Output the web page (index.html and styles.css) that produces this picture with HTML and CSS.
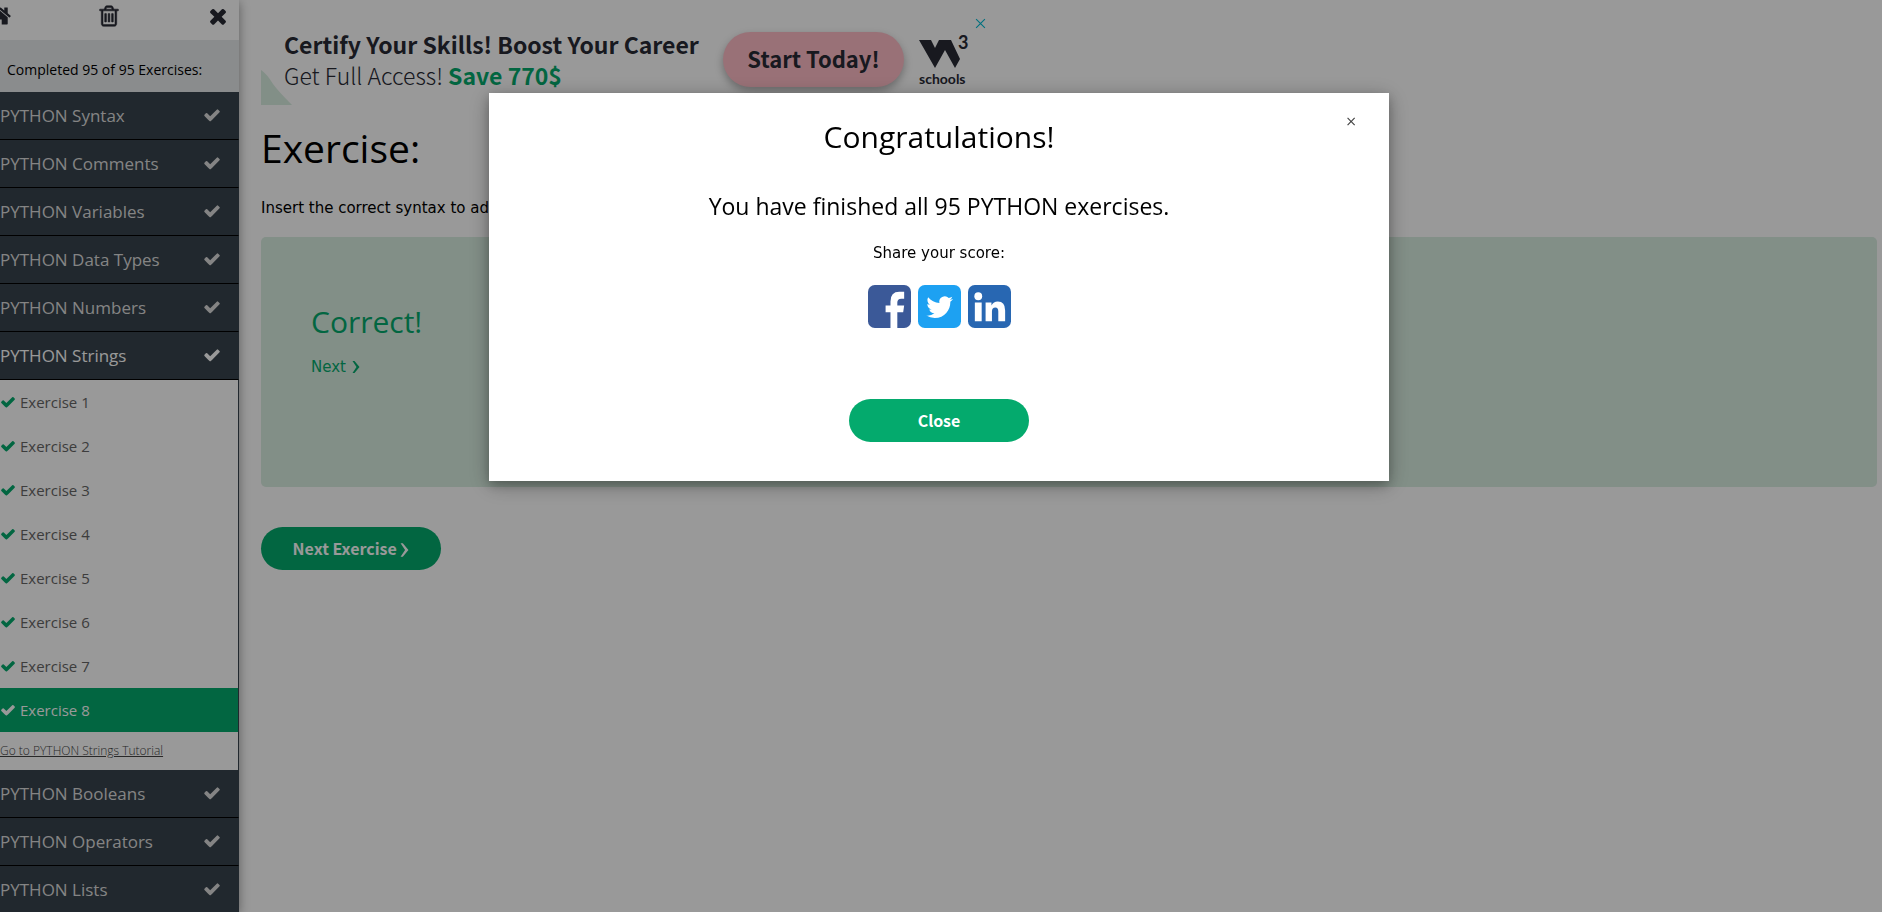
FILE: index.html
```html
<!DOCTYPE html>
<html lang="en">
<head>
<meta charset="utf-8">
<title>PYTHON Exercises</title>
<link rel="stylesheet" href="styles.css">
</head>
<body>
<svg class="sprite" aria-hidden="true">
  <symbol id="check" viewBox="0 0 1792 1792"><path d="M1671 566q0 40-28 68l-724 724-136 136q-28 28-68 28t-68-28l-136-136-362-362q-28-28-28-68t28-68l136-136q28-28 68-28t68 28l294 295 656-657q28-28 68-28t68 28l136 136q28 28 28 68z"/></symbol>
  <symbol id="times" viewBox="0 0 1792 1792"><path d="M1490 1322q0 40-28 68l-136 136q-28 28-68 28t-68-28l-294-294-294 294q-28 28-68 28t-68-28l-136-136q-28-28-28-68t28-68l294-294-294-294q-28-28-28-68t28-68l136-136q28-28 68-28t68 28l294 294 294-294q28-28 68-28t68 28l136 136q28 28 28 68t-28 68l-294 294 294 294q28 28 28 68z"/></symbol>
  <symbol id="home" viewBox="0 0 1792 1792"><path d="M1472 992v480q0 26-19 45t-45 19h-384v-384h-256v384h-384q-26 0-45-19t-19-45v-480q0-1 .5-3t.5-3l575-474 575 474q1 2 1 6zm223-69l-62 74q-8 9-21 11h-3q-13 0-21-7l-692-577-692 577q-12 8-24 7-13-2-21-11l-62-74q-8-10-7-23.5t11-21.5l719-599q32-26 76-26t76 26l244 204v-195q0-14 9-23t23-9h192q14 0 23 9t9 23v408l219 182q10 8 11 21.5t-7 23.5z"/></symbol>
  <symbol id="trash" viewBox="0 0 1792 1792"><path d="M704 736v576q0 14-9 23t-23 9h-64q-14 0-23-9t-9-23v-576q0-14 9-23t23-9h64q14 0 23 9t9 23zm256 0v576q0 14-9 23t-23 9h-64q-14 0-23-9t-9-23v-576q0-14 9-23t23-9h64q14 0 23 9t9 23zm256 0v576q0 14-9 23t-23 9h-64q-14 0-23-9t-9-23v-576q0-14 9-23t23-9h64q14 0 23 9t9 23zm128 724v-948h-896v948q0 22 7 40.500t14.500 27 10.500 8.500h832q3 0 10.500-8.500t14.500-27 7-40.500zm-672-1076h448l-48-117q-7-9-17-11h-317q-10 2-17 11zm928 32v64q0 14-9 23t-23 9h-96v948q0 83-47 143.500t-113 60.500h-832q-66 0-113-58.500t-47-141.500v-952h-96q-14 0-23-9t-9-23v-64q0-14 9-23t23-9h309l70-167q15-37 54-63t79-26h320q40 0 79 26t54 63l70 167h309q14 0 23 9t9 23z"/></symbol>
  <symbol id="chevron" viewBox="0 0 8 12"><path d="M0.500 0H2.500L7.500 6L2.500 12H0.500L4.500 6z"/></symbol>
</svg>

<div class="app">
  <nav class="sidebar">
    <div class="toolbar">
      <a class="tool" href="#" aria-label="Home"><svg class="icon-lg"><use href="#home"/></svg></a>
      <button class="tool" type="button" aria-label="Reset score"><svg class="icon-lg icon-trash"><use href="#trash"/></svg></button>
      <button class="tool" type="button" aria-label="Close menu"><svg class="icon-lg"><use href="#times"/></svg></button>
    </div>
    <p class="progress">Completed 95 of 95 Exercises:</p>
    <button class="topic" type="button">PYTHON Syntax<svg class="icon-md"><use href="#check"/></svg></button>
    <button class="topic" type="button">PYTHON Comments<svg class="icon-md"><use href="#check"/></svg></button>
    <button class="topic" type="button">PYTHON Variables<svg class="icon-md"><use href="#check"/></svg></button>
    <button class="topic" type="button">PYTHON Data Types<svg class="icon-md"><use href="#check"/></svg></button>
    <button class="topic" type="button">PYTHON Numbers<svg class="icon-md"><use href="#check"/></svg></button>
    <button class="topic topic-open" type="button">PYTHON Strings<svg class="icon-md"><use href="#check"/></svg></button>
    <div class="lessons">
      <a class="lesson" href="#"><svg class="icon-sm"><use href="#check"/></svg>Exercise 1</a>
      <a class="lesson" href="#"><svg class="icon-sm"><use href="#check"/></svg>Exercise 2</a>
      <a class="lesson" href="#"><svg class="icon-sm"><use href="#check"/></svg>Exercise 3</a>
      <a class="lesson" href="#"><svg class="icon-sm"><use href="#check"/></svg>Exercise 4</a>
      <a class="lesson" href="#"><svg class="icon-sm"><use href="#check"/></svg>Exercise 5</a>
      <a class="lesson" href="#"><svg class="icon-sm"><use href="#check"/></svg>Exercise 6</a>
      <a class="lesson" href="#"><svg class="icon-sm"><use href="#check"/></svg>Exercise 7</a>
      <a class="lesson lesson-current" href="#"><svg class="icon-sm"><use href="#check"/></svg>Exercise 8</a>
      <a class="tutorial" href="#">Go to PYTHON Strings Tutorial</a>
    </div>
    <button class="topic" type="button">PYTHON Booleans<svg class="icon-md"><use href="#check"/></svg></button>
    <button class="topic" type="button">PYTHON Operators<svg class="icon-md"><use href="#check"/></svg></button>
    <button class="topic" type="button">PYTHON Lists<svg class="icon-md"><use href="#check"/></svg></button>
  </nav>

  <main class="main">
    <div class="banner">
      <svg class="banner-corner" viewBox="0 0 31 35" aria-hidden="true"><path d="M0 0Q6 4 12 14Q17 21 31 35H0z"/></svg>
      <div class="banner-text">
        <strong class="banner-title">Certify Your Skills! Boost Your Career</strong>
        <span class="banner-sub">Get Full Access! <b class="save">Save 770$</b></span>
      </div>
      <a class="banner-cta" href="#">Start Today!</a>
      <div class="logo">
        <svg class="logo-mark" viewBox="0 0 49 33" aria-hidden="true">
          <path d="M0 5H12L16 13L20 5H32L41 24L36 33L26 15L16 33z"/>
          <text class="logo-three" x="39" y="14">3</text>
        </svg>
        <span class="logo-name">schools</span>
      </div>
      <button class="banner-close" type="button" aria-label="Close ad"><svg class="banner-x" viewBox="0 0 10 10"><path d="M1 1L9 9M9 1L1 9"/></svg></button>
    </div>
    <h1 class="title">Exercise:</h1>
    <p class="task">Insert the correct syntax to add</p>
    <section class="result">
      <h2 class="result-title">Correct!</h2>
      <a class="result-next" href="#">Next <svg class="chevron"><use href="#chevron"/></svg></a>
    </section>
    <button class="pill" type="button">Next Exercise <svg class="chevron chevron-lg"><use href="#chevron"/></svg></button>
  </main>
</div>

<div class="overlay">
  <div class="modal" role="dialog" aria-modal="true" aria-labelledby="modal-title">
    <button class="modal-x" type="button" aria-label="Close dialog">×</button>
    <h2 class="modal-title" id="modal-title">Congratulations!</h2>
    <p class="modal-lead">You have finished all 95 PYTHON exercises.</p>
    <p class="modal-share">Share your score:</p>
    <div class="social">
      <a href="#" aria-label="Share on Facebook"><svg class="social-icon" viewBox="0 0 44 44"><rect width="44" height="44" rx="7" fill="#3b5998"/><path fill="#fff" d="M23 44V28H18V21H23V17Q23 7 32 7H37V14H34Q30 14 30 18V21H37L36 28H30V44z"/></svg></a>
      <a href="#" aria-label="Share on Twitter"><svg class="social-icon" viewBox="0 0 44 44"><rect width="44" height="44" rx="7" fill="#1da1f2"/><path fill="#fff" transform="translate(8.500 9) scale(1.140)" d="M23.950 4.570a10 10 0 0 1-2.820.770 4.960 4.960 0 0 0 2.160-2.720c-.950.550-2 .960-3.130 1.180a4.920 4.920 0 0 0-8.380 4.480C7.690 8.100 4.070 6.130 1.640 3.160a4.920 4.920 0 0 0 1.520 6.570 4.900 4.900 0 0 1-2.230-.610v.060a4.920 4.920 0 0 0 3.950 4.830 5 5 0 0 1-2.210.080 4.940 4.940 0 0 0 4.600 3.420A9.870 9.870 0 0 1 0 19.540a13.990 13.990 0 0 0 7.550 2.210c9.050 0 14-7.500 14-13.980 0-.210 0-.420-.020-.630a9.940 9.940 0 0 0 2.460-2.550z"/></svg></a>
      <a href="#" aria-label="Share on LinkedIn"><svg class="social-icon" viewBox="0 0 44 44"><rect width="44" height="44" rx="7" fill="#2867b2"/><g fill="#fff"><circle cx="10.500" cy="11.500" r="4"/><path d="M7 18H14V37H7zM18 18H24V21Q26 17 30.500 17Q38 17 38 26V37H31V27Q31 23 28 23Q24.500 23 24.500 27V37H18z"/></g></svg></a>
    </div>
    <button class="pill" type="button">Close</button>
  </div>
</div>
</body>
</html>
```
FILE: styles.css
```css
* { box-sizing: border-box; }

body {
  margin: 0;
  overflow: hidden;
  background: #fff;
  color: #000;
  font-family: "DejaVu Sans", Verdana, sans-serif;
  font-size: 15px;
}

h1, h2, p { margin: 0; font-weight: 400; }
a { color: inherit; text-decoration: none; }
button { margin: 0; padding: 0; border: 0; background: none; font: inherit; color: inherit; cursor: pointer; }
svg { display: block; }
.sprite { display: none; }
.icon-lg { width: 24px; height: 24px; fill: #282a35; }
.icon-trash { stroke: #282a35; stroke-width: 40px; }
.icon-md { width: 18px; height: 18px; fill: currentColor; }
.icon-sm { width: 16px; height: 16px; fill: #04aa6d; }
.chevron { display: inline-block; width: 8px; height: 12px; margin-left: 1px; fill: currentColor; vertical-align: -1px; }
.chevron-lg { width: 9px; height: 14px; margin-left: 0; vertical-align: -2px; }

.app { display: flex; height: 100vh; }

/* Sidebar */
.sidebar {
  position: relative;
  flex: none;
  width: 239px;
  overflow: clip;
  overflow-clip-margin: 20px;
  background: #fff;
  box-shadow: 0 2px 10px rgba(0, 0, 0, 0.4);
  font-family: "Open Sans", "Segoe UI", sans-serif;
}
.toolbar { display: flex; justify-content: space-between; height: 40px; padding: 4px 9px 0 0; margin-left: -12px; }
.tool { height: 24px; }
.progress { padding: 18px 7px 0; height: 52px; background: #e7e9eb; font-size: 14px; line-height: 24px; white-space: nowrap; }
.topic {
  display: flex;
  align-items: center;
  justify-content: space-between;
  width: 100%;
  height: 48px;
  padding: 0 17px 1px 0;
  border-right: 1px solid #38444d;
  border-bottom: 1px solid #000;
  background: #38444d;
  color: #ddd;
  font-size: 17px;
  text-align: left;
}
.topic-open { color: #fff; }
.lessons { border-right: 1px solid #38444d; }
.lesson { display: flex; align-items: center; gap: 4px; height: 44px; color: #666; font-size: 15px; }
.lesson-current { background: #04aa6d; color: #fff; }
.lesson-current .icon-sm { fill: #fff; }
.tutorial { display: block; height: 38px; color: #444; font-size: 12px; font-weight: 300; line-height: 38px; text-decoration: underline; }

/* Main column */
.main { flex: 1; min-width: 0; padding: 15px 5px 0 22px; }
.banner {
  position: relative;
  display: flex;
  align-items: flex-start;
  max-width: 728px;
  height: 90px;
  color: #282a35;
  font-family: "Noto Sans CJK SC", "Source Sans Pro", sans-serif;
  white-space: nowrap;
}
.banner-corner { position: absolute; left: 0; bottom: 0; width: 31px; height: 35px; fill: #d9eee1; }
.banner-text { display: flex; flex-direction: column; width: 462px; padding: 14px 0 0 23px; font-size: 23px; line-height: 31px; }
.banner-title { font-weight: 700; }
.banner-sub { font-weight: 300; }
.save { color: #04aa6d; font-weight: 700; }
.banner-cta {
  width: 181px;
  height: 55px;
  margin-top: 17px;
  border-radius: 28px;
  background: #ffbdc7;
  box-shadow: 0 4px 8px rgba(0, 0, 0, 0.3);
  font-size: 22px;
  font-weight: 700;
  line-height: 53px;
  text-align: center;
}
.logo { width: 49px; margin: 20px 0 0 15px; }
.logo-mark { width: 49px; height: 33px; fill: #282a35; overflow: visible; }
.logo-three { font-family: Lato, sans-serif; font-size: 18px; font-weight: 700; }
.logo-name { display: block; font-family: Lato, sans-serif; font-size: 14px; font-weight: 700; line-height: 22px; }
.banner-close { position: absolute; top: 3px; right: 3px; }
.banner-x { width: 11px; height: 11px; fill: none; stroke: #00bcd4; }

.title { padding-top: 11px; font-family: "Open Sans", "Segoe UI", sans-serif; font-size: 39px; line-height: 64px; }
.task { padding-top: 16px; line-height: 24px; }
.result { height: 250px; margin-top: 17px; padding: 61px 50px; border-radius: 5px; background: #d9eee1; color: #04aa6d; }
.result-title { font-family: "Open Sans", "Segoe UI", sans-serif; font-size: 30px; line-height: 48px; }
.result-next { display: block; line-height: 24px; padding-top: 9px; }
.pill {
  display: block;
  width: 180px;
  height: 43px;
  padding-bottom: 2px;
  border-radius: 22px;
  background: #04aa6d;
  color: #fff;
  font-family: "Noto Sans CJK SC", "Source Sans Pro", sans-serif;
  font-size: 16px;
  font-weight: 700;
  text-align: center;
}
.main .pill { margin-top: 40px; }

/* Dialog */
.overlay { position: fixed; inset: 0; padding: 93px 4px 0 0; background: rgba(0, 0, 0, 0.4); }
.modal {
  position: relative;
  display: flex;
  flex-direction: column;
  align-items: center;
  max-width: 900px;
  margin: 0 auto;
  padding: 20px 16px 39px;
  background: #fff;
  box-shadow: 0 4px 10px rgba(0, 0, 0, 0.2), 0 4px 20px rgba(0, 0, 0, 0.3);
}
.modal-x { position: absolute; top: 16px; right: 26px; width: 24px; height: 24px; color: #444; font-size: 14px; }
.modal-title { font-family: "Open Sans", "Segoe UI", sans-serif; font-size: 30px; line-height: 48px; }
.modal-lead { padding-top: 27px; font-family: "Open Sans", "Segoe UI", sans-serif; font-size: 23px; line-height: 36px; }
.modal-share { padding-top: 17px; line-height: 24px; }
.social { display: flex; gap: 7px; padding: 20px 0 71px; }
.social-icon { width: 43px; height: 43px; }
```
